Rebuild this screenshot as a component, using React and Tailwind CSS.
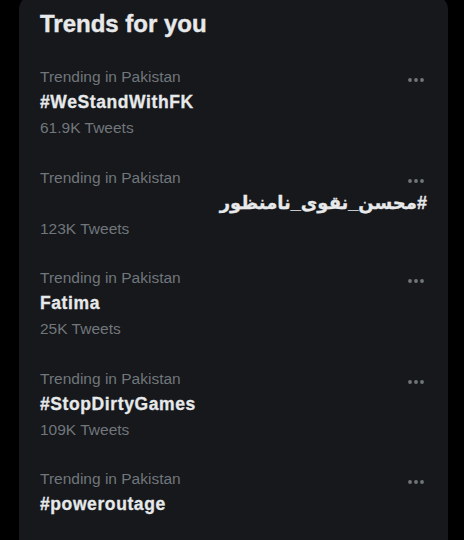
import React from "react";

const trends = [
  { place: "Trending in Pakistan", name: "#WeStandWithFK", count: "61.9K Tweets" },
  { place: "Trending in Pakistan", name: "#محسن_نقوی_نامنظور", count: "123K Tweets", rtl: true },
  { place: "Trending in Pakistan", name: "Fatima", count: "25K Tweets" },
  { place: "Trending in Pakistan", name: "#StopDirtyGames", count: "109K Tweets" },
  { place: "Trending in Pakistan", name: "#poweroutage", count: "" },
];

function MoreIcon() {
  return (
    <svg viewBox="0 0 20 20" className="h-5 w-5" fill="#71767b">
      <circle cx="4" cy="10" r="1.9" />
      <circle cx="10" cy="10" r="1.9" />
      <circle cx="16" cy="10" r="1.9" />
    </svg>
  );
}

function TrendRow({ trend }) {
  return (
    <div className="relative flex flex-col px-[21px] py-3">
      <span className="text-[15.5px] leading-[25px] text-[#71767b]">{trend.place}</span>
      {trend.rtl ? (
        <div
          dir="rtl"
          className="text-[18px] font-bold leading-[26px] text-[#e7e9ea] [-webkit-text-stroke:0.3px_#e7e9ea]"
        >
          {trend.name}
        </div>
      ) : (
        <div className="text-[17.5px] font-bold leading-[26px] tracking-[0.6px] text-[#e7e9ea] [-webkit-text-stroke:0.3px_#e7e9ea]">
          {trend.name}
        </div>
      )}
      <div className="h-[25.5px] text-[15.5px] leading-[26px] text-[#71767b]">{trend.count}</div>
      <button className="absolute right-[22px] top-[18px]">
        <MoreIcon />
      </button>
    </div>
  );
}

export default function App() {
  return (
    <div
      className="h-[540px] w-[464px] overflow-hidden bg-black"
      style={{ fontFamily: '"Liberation Sans", "DejaVu Sans", Arial, sans-serif' }}
    >
      <div className="ml-[19px] mt-[-6px] h-[580px] w-[429px] rounded-t-2xl bg-[#16181c] pt-[14px]">
        <h2 className="px-[21px] text-[24px] font-bold leading-[32px] text-[#e7e9ea] [-webkit-text-stroke:0.4px_#e7e9ea]">
          Trends for you
        </h2>
        <div className="mt-3">
          {trends.map((t, i) => (
            <TrendRow key={i} trend={t} />
          ))}
        </div>
      </div>
    </div>
  );
}
